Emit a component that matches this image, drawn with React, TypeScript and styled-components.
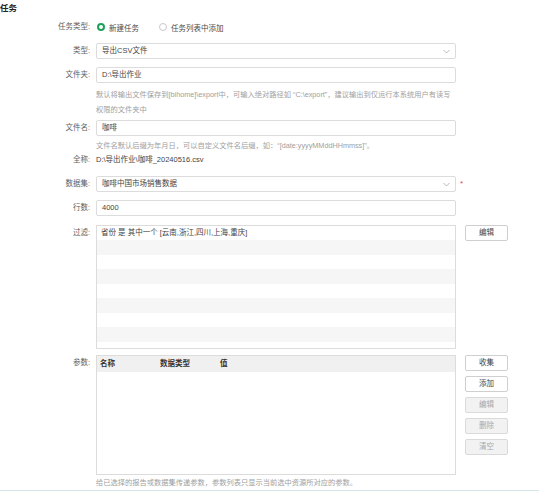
import React from 'react'
import styled, { createGlobalStyle } from 'styled-components'

const GlobalStyle = createGlobalStyle`
  html, body {
    margin: 0;
    padding: 0;
    background: #fff;
  }
  body {
    font-family: "Liberation Sans", "Noto Sans CJK SC", sans-serif;
    font-size: 7.5px;
    color: #444;
  }
`

const Page = styled.div`
  width: 539px;
  height: 490px;
  border-bottom: 1px solid #d4e5ec;
  overflow: hidden;
  display: flex;
  flex-direction: column;
`

const Title = styled.div`
  height: 17px;
  line-height: 17px;
  font-size: 8.5px;
  font-weight: 700;
  color: #222;
`

const Row = styled.div<{ $mt?: number; $h?: number }>`
  display: grid;
  grid-template-columns: 90px 360px 1fr;
  column-gap: 6px;
  align-items: start;
  margin-top: ${(p) => p.$mt ?? 0}px;
  min-height: ${(p) => p.$h ?? 16}px;
`

const Label = styled.div<{ $lh?: number }>`
  text-align: right;
  color: #5e5e5e;
  line-height: ${(p) => p.$lh ?? 16}px;
  white-space: nowrap;
`

const Input = styled.div`
  box-sizing: border-box;
  height: 16px;
  border: 1px solid #dcdcdc;
  border-radius: 2px;
  padding: 0 5px;
  line-height: 14px;
  color: #444;
  display: flex;
  align-items: center;
  justify-content: space-between;
  white-space: nowrap;
`

const Hint = styled.div<{ $lh?: number }>`
  color: #a0a0a0;
  font-size: 7.25px;
  line-height: ${(p) => p.$lh ?? 15}px;
  white-space: nowrap;
`

const Plain = styled.div`
  line-height: 14px;
  color: #444;
  white-space: nowrap;
`

const Radios = styled.div`
  display: flex;
  align-items: center;
  height: 16px;
  gap: 19px;
`

const RadioItem = styled.label`
  display: flex;
  align-items: center;
  gap: 4px;
  color: #4a4a4a;
`

const RadioDot = styled.span<{ $on?: boolean }>`
  box-sizing: border-box;
  width: 8px;
  height: 8px;
  border-radius: 50%;
  margin-left: 1px;
  border: ${(p) => (p.$on ? '2.5px solid #1ba15b' : '1px solid #c8c8c8')};
  background: #fff;
`

const Required = styled.span`
  color: #e64545;
  line-height: 16px;
  font-size: 8px;
  margin-left: -2px;
`

const StripedBox = styled.div`
  box-sizing: border-box;
  height: 124px;
  border: 1px solid #dcdcdc;
  padding: 0 4px;
  line-height: 14.5px;
  color: #444;
  background: repeating-linear-gradient(
    to bottom,
    #fff 0,
    #fff 14.5px,
    #f6f6f6 14.5px,
    #f6f6f6 29px
  );
`

const Table = styled.div`
  box-sizing: border-box;
  height: 120px;
  border: 1px solid #dcdcdc;
`

const TableHead = styled.div`
  display: grid;
  grid-template-columns: 60px 60px 1fr;
  height: 16px;
  line-height: 16px;
  background: #f0f0f0;
  padding-left: 3px;
  color: #333;
  font-weight: 700;
`

const Side = styled.div`
  display: flex;
  flex-direction: column;
  gap: 5px;
  padding-left: 3px;
`

const Button = styled.button<{ $disabled?: boolean }>`
  box-sizing: border-box;
  width: 43px;
  height: 16px;
  padding: 0;
  border-radius: 2px;
  font-family: inherit;
  font-size: 7.5px;
  line-height: 14px;
  border: 1px solid ${(p) => (p.$disabled ? '#dadada' : '#cfcfcf')};
  background: ${(p) => (p.$disabled ? '#f2f2f2' : '#fff')};
  color: ${(p) => (p.$disabled ? '#a8a8a8' : '#444')};
`

const Chevron = () => (
  <svg width="7" height="5" viewBox="0 0 7 5" style={{ flexShrink: 0 }}>
    <polyline points="0.5,1 3.5,4 6.5,1" fill="none" stroke="#aaa" strokeWidth="0.8" />
  </svg>
)

export default function App() {
  return (
    <>
      <GlobalStyle />
      <Page>
        <Title>任务</Title>

        <Row $mt={2}>
          <Label>任务类型:</Label>
          <Radios>
            <RadioItem>
              <RadioDot $on />
              新建任务
            </RadioItem>
            <RadioItem>
              <RadioDot />
              任务列表中添加
            </RadioItem>
          </Radios>
        </Row>

        <Row $mt={8}>
          <Label>类型:</Label>
          <Input>
            导出CSV文件
            <Chevron />
          </Input>
        </Row>

        <Row $mt={8}>
          <Label>文件夹:</Label>
          <Input>D:\导出作业</Input>
        </Row>

        <Row $mt={4} $h={30}>
          <div />
          <Hint>
            默认将输出文件保存到[bihome]\export中，可输入绝对路径如 “C:\export”，建议输出到仅运行本系统用户有读写
            <br />
            权限的文件夹中
          </Hint>
        </Row>

        <Row $mt={3}>
          <Label>文件名:</Label>
          <Input>咖啡</Input>
        </Row>

        <Row $mt={3} $h={14}>
          <div />
          <Hint $lh={14}>文件名默认后缀为年月日，可以自定义文件名后缀，如：“[date:yyyyMMddHHmmss]”。</Hint>
        </Row>

        <Row $h={14}>
          <Label $lh={14}>全称:</Label>
          <Plain>D:\导出作业\咖啡_20240516.csv</Plain>
        </Row>

        <Row $mt={9}>
          <Label>数据集:</Label>
          <Input>
            咖啡中国市场销售数据
            <Chevron />
          </Input>
          <Required>*</Required>
        </Row>

        <Row $mt={8}>
          <Label>行数:</Label>
          <Input>4000</Input>
        </Row>

        <Row $mt={9}>
          <Label>过滤:</Label>
          <StripedBox>省份 是 其中一个 [云南,浙江,四川,上海,重庆]</StripedBox>
          <Side>
            <Button>编辑</Button>
          </Side>
        </Row>

        <Row $mt={9}>
          <Label>参数:</Label>
          <Table>
            <TableHead>
              <span>名称</span>
              <span>数据类型</span>
              <span>值</span>
            </TableHead>
          </Table>
          <Side>
            <Button>收集</Button>
            <Button>添加</Button>
            <Button $disabled>编辑</Button>
            <Button $disabled>删除</Button>
            <Button $disabled>清空</Button>
          </Side>
        </Row>

        <Row $mt={4} $h={14}>
          <div />
          <Hint $lh={14}>给已选择的报告或数据集传递参数，参数列表只显示当前选中资源所对应的参数。</Hint>
        </Row>
      </Page>
    </>
  )
}
